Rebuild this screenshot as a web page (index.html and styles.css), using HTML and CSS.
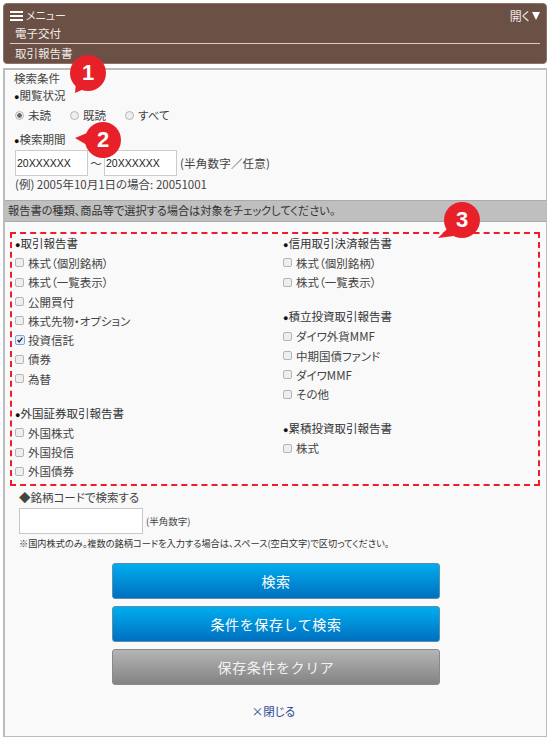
FILE: index.html
```html
<!DOCTYPE html>
<html lang="ja">
<head>
<meta charset="utf-8">
<title>取引報告書</title>
<link rel="stylesheet" href="styles.css">
</head>
<body>
<header class="head">
  <div class="head-top">
    <div class="menu"><span class="burger"><i></i><i></i><i></i></span><span>メニュー</span></div>
    <div class="open">開く<span class="tri"></span></div>
  </div>
  <div class="head-sub">電子交付</div>
  <div class="head-page">取引報告書</div>
</header>
<main class="panel">
  <section class="cond">
    <div class="line">検索条件</div>
    <div class="line"><span class="dot">●</span>閲覧状況</div>
    <div class="radios">
      <label class="radio"><span class="rb on"></span>未読</label>
      <label class="radio"><span class="rb"></span>既読</label>
      <label class="radio"><span class="rb"></span>すべて</label>
    </div>
    <div class="line period"><span class="dot">●</span>検索期間</div>
    <div class="dates">
      <span class="date">20XXXXXX</span><span class="wave">～</span><span class="date">20XXXXXX</span><span class="note">(半角数字／任意)</span>
    </div>
    <div class="example">(例) 2005年10月1日の場合: 20051001</div>
  </section>
  <div class="bar">報告書の種類、商品等で選択する場合は対象をチェックしてください。</div>
  <section class="types">
    <div class="col">
      <div class="group">
        <div class="gt"><span class="dot">●</span>取引報告書</div>
        <div class="ck"><span class="cb"></span>株式（個別銘柄）</div>
        <div class="ck"><span class="cb"></span>株式（一覧表示）</div>
        <div class="ck"><span class="cb"></span>公開買付</div>
        <div class="ck"><span class="cb"></span>株式先物・オプション</div>
        <div class="ck"><span class="cb on"><svg viewBox="0 0 10 10" width="10" height="10"><path d="M2 5l2 2.4L8 2" fill="none" stroke="#222" stroke-width="1.6"/></svg></span>投資信託</div>
        <div class="ck"><span class="cb"></span>債券</div>
        <div class="ck"><span class="cb"></span>為替</div>
      </div>
      <div class="group">
        <div class="gt"><span class="dot">●</span>外国証券取引報告書</div>
        <div class="ck"><span class="cb"></span>外国株式</div>
        <div class="ck"><span class="cb"></span>外国投信</div>
        <div class="ck"><span class="cb"></span>外国債券</div>
      </div>
    </div>
    <div class="col">
      <div class="group">
        <div class="gt"><span class="dot">●</span>信用取引決済報告書</div>
        <div class="ck"><span class="cb"></span>株式（個別銘柄）</div>
        <div class="ck"><span class="cb"></span>株式（一覧表示）</div>
      </div>
      <div class="group">
        <div class="gt"><span class="dot">●</span>積立投資取引報告書</div>
        <div class="ck"><span class="cb"></span>ダイワ外貨MMF</div>
        <div class="ck"><span class="cb"></span>中期国債ファンド</div>
        <div class="ck"><span class="cb"></span>ダイワMMF</div>
        <div class="ck"><span class="cb"></span>その他</div>
      </div>
      <div class="group">
        <div class="gt"><span class="dot">●</span>累積投資取引報告書</div>
        <div class="ck"><span class="cb"></span>株式</div>
      </div>
    </div>
  </section>
  <section class="code">
    <div class="code-title">◆銘柄コードで検索する</div>
    <div class="code-row"><span class="code-input"></span><span class="code-hint">(半角数字)</span></div>
    <div class="code-note">※国内株式のみ。複数の銘柄コードを入力する場合は、スペース(空白文字)で区切ってください。</div>
  </section>
  <div class="actions">
    <button class="btn blue">検索</button>
    <button class="btn blue">条件を保存して検索</button>
    <button class="btn gray">保存条件をクリア</button>
  </div>
  <a class="close">×閉じる</a>
</main>
<div class="badge b1">1</div>
<div class="badge b2">2</div>
<div class="badge b3">3</div>
</body>
</html>
```
FILE: styles.css
```css
* { box-sizing: border-box; }
html, body { margin: 0; }
body {
  width: 550px; height: 740px; padding: 3px 3px 0; position: relative; overflow: hidden;
  background: #fff; color: #444;
  font: 11.5px/16px "Noto Sans CJK JP", "Noto Sans", sans-serif;
  font-feature-settings: "palt";
}
.dot { font: 9px/1 "Liberation Sans", "DejaVu Sans", sans-serif; color: #111; vertical-align: 0; }
.head {
  height: 61px; background: #6a5045; border: 1px solid #8a7568; border-radius: 4px;
  color: #f0ebe8; padding: 4px 6px 0 6px;
}
.head-top { display: flex; justify-content: space-between; height: 15px; line-height: 15px; font-size: 11px; }
.menu { display: flex; align-items: center; gap: 3px; }
.burger { display: flex; flex-direction: column; gap: 2px; width: 13px; }
.burger i { display: block; height: 2px; background: #fff; }
.open { display: flex; align-items: center; gap: 2px; font-size: 12px; }
.tri { width: 0; height: 0; border-left: 4.5px solid transparent; border-right: 4.5px solid transparent; border-top: 8px solid #fff; }
.head-sub { margin-left: 5px; height: 20px; line-height: 20px; }
.head-page { border-top: 1px solid #d8cdc6; height: 20px; padding-left: 5px; line-height: 19px; }
.panel {
  margin-top: 4px; height: 669px; border: 1px solid #bcbcbc; border-top-width: 2px; border-left-width: 2px;
  background: #f9f9f9; display: flex; flex-direction: column;
}
.cond { height: 130px; padding: 0 0 0 9px; }
.line { height: 17px; line-height: 17px; }
.radios { display: flex; height: 20px; margin-top: 1px; align-items: center; }
.radio { display: flex; align-items: center; gap: 4px; padding-left: 1px; width: 55px; }
.radio:last-child { width: auto; }
.rb { width: 9px; height: 9px; border-radius: 50%; background: #eee; border: 1px solid #b5b5b5; display: block; }
.rb.on { background: radial-gradient(circle, #666 0 2px, #eee 2.5px); }
.period { margin-top: 6px; }
.dates { display: flex; align-items: center; margin-top: 2px; height: 26px; margin-left: 1px; }
.date { width: 73px; height: 26px; border: 1px solid #ccc; background: #fff; padding-left: 1px; font: 10.5px/24px "Liberation Sans", sans-serif; color: #222; }
.wave { width: 16px; text-align: center; }
.note { margin-left: 3px; letter-spacing: .2px; }
.example { margin-left: 1px; height: 16px; }
.bar { height: 22px; background: #bfbfbf; border-top: 1px solid #aaa; border-bottom: 1px solid #aaa; padding-left: 3px; line-height: 19px; font-size: 11.2px; color: #333; }
.types {
  margin: 10px 6px 0 5px; height: 254px; border: 2px dashed #f01c2c; display: flex; padding: 0 0 0 3px;
}
.col { width: 268px; flex: none; }
.col + .col { width: 250px; }
.group { margin-bottom: 15.4px; }
.gt { height: 19.3px; line-height: 19.3px; color: #333; }
.ck { display: flex; align-items: center; height: 19.3px; gap: 4px; }
.cb { width: 9px; height: 9px; border: 1px solid #b5b5b5; border-radius: 2px; background: #eee; display: flex; align-items: center; justify-content: center; }
.cb.on { width: 10px; height: 10px; margin-right: -1px; border-color: #7ba7e8; background: #e6eefb; }
.code { padding: 3px 0 0 14px; }
.code-title { height: 16px; line-height: 16px; }
.code-row { display: flex; align-items: center; margin-top: 3px; }
.code-input { display: block; width: 124px; height: 26px; border: 1px solid #c8c8c8; background: #fff; }
.code-hint { margin-left: 3px; font-size: 9.5px; }
.code-note { margin-top: 2px; font-size: 9.2px; line-height: 14px; color: #333; white-space: nowrap; }
.actions { display: flex; flex-direction: column; gap: 7px; margin: 13px 0 0 107px; }
.btn {
  width: 328px; height: 36px; border: 1px solid #9aa; border-radius: 3px; color: #fff; padding: 0;
  font: 14px/20px "Noto Sans CJK JP", "Noto Sans", sans-serif; letter-spacing: .6px; font-feature-settings: normal;
}
.blue { background: linear-gradient(#00adef, #0070c0); border-color: #5a8fb0; }
.gray { background: linear-gradient(#b5b5b5, #838383); border-color: #8a8a8a; color: #f2f2f2; }
.close { align-self: center; margin-top: 18px; margin-left: -4px; color: #2a4a9a; }
.badge {
  position: absolute; width: 36px; height: 36px; border-radius: 50%; background: #e8202a; color: #fff;
  font: 700 22px/36px "Liberation Sans", sans-serif; text-align: center;
}
.badge::after { content: ""; position: absolute; background: #e8202a; }
.b1 { left: 70px; top: 55px; }
.b1::after { left: 0; top: 26px; width: 20px; height: 14px; clip-path: polygon(5px 12px, 6px 2px, 14px 0, 14px 8px); }
.b2 { left: 85px; top: 122px; }
.b2::after { left: -12px; top: 8px; width: 20px; height: 20px; clip-path: polygon(2px 8px, 14px 3px, 20px 3px, 20px 15px, 14px 15px); }
.b3 { left: 444px; top: 202px; }
.b3::after { left: -8px; top: 24px; width: 20px; height: 16px; clip-path: polygon(2px 12px, 11px 3px, 18px 3px, 18px 10px); }
```
